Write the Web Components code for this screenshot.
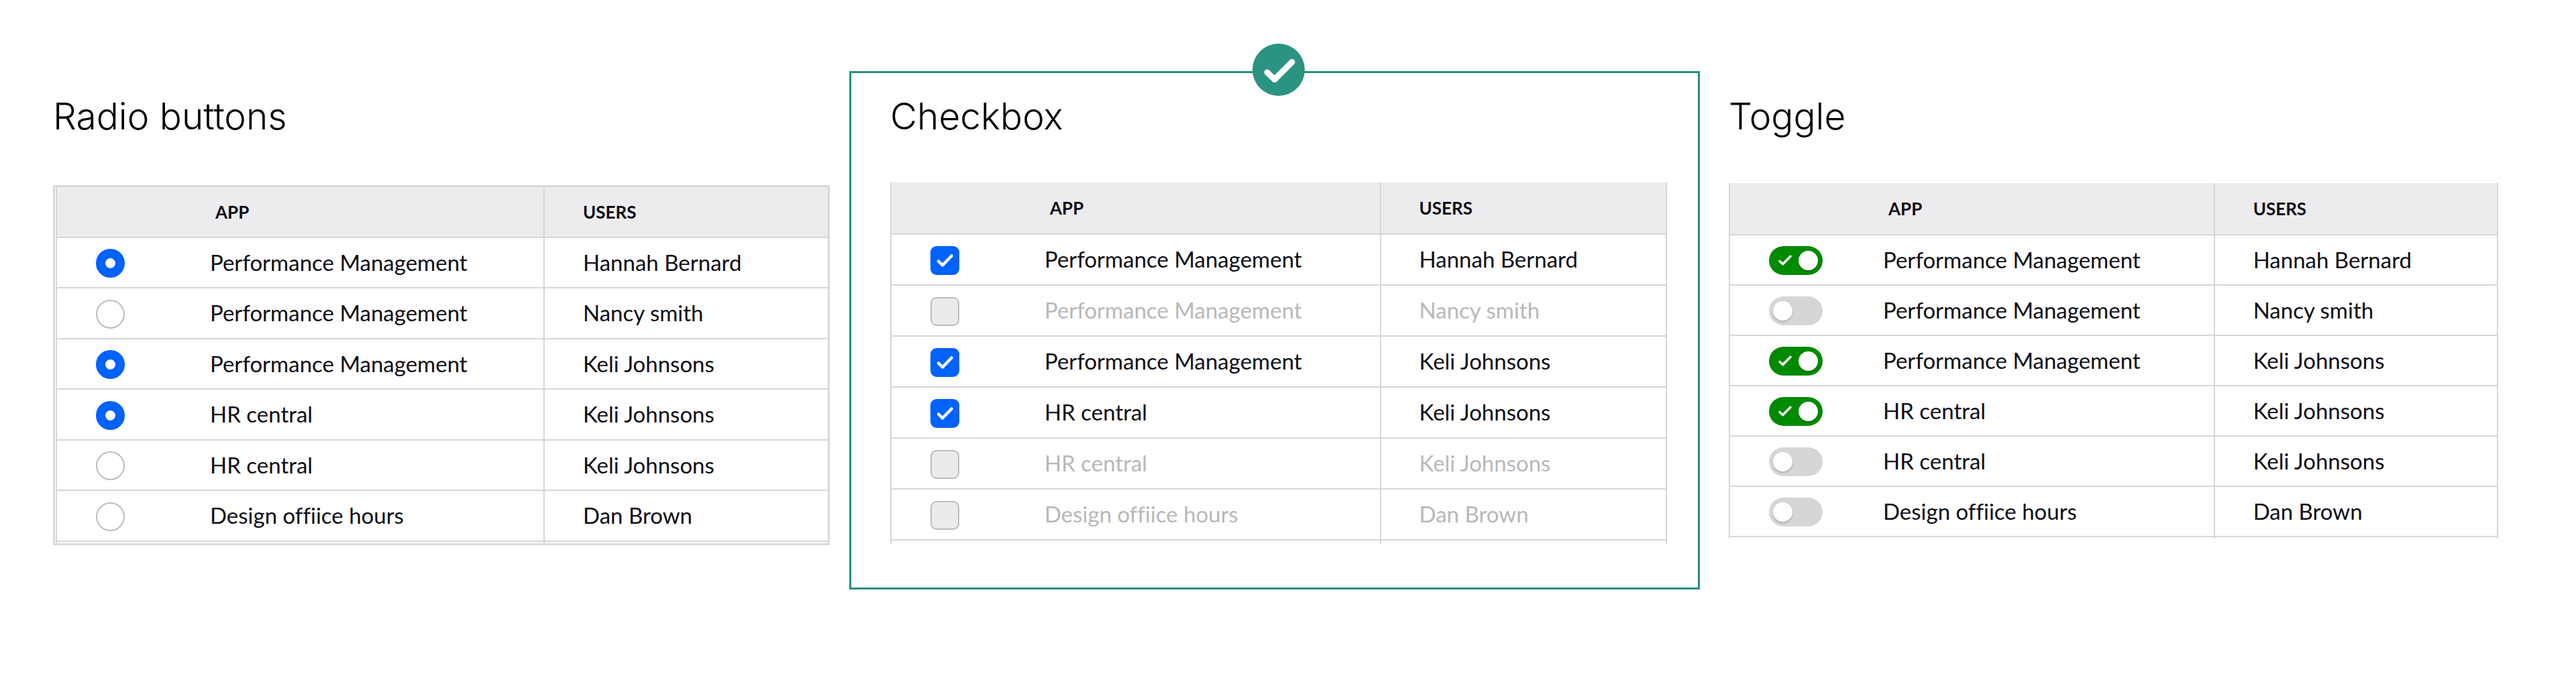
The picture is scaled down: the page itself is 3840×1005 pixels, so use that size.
<!DOCTYPE html>
<html lang="en">
<head>
<meta charset="utf-8">
<title>Selection controls</title>
<style>
  body { margin: 0; background: #fff; font-family: "Lato", sans-serif; color: #0d0d16; }
</style>
</head>
<body>
<control-gallery>
  <control-panel heading="Radio buttons"><app-table kind="radio"></app-table></control-panel>
  <control-panel heading="Checkbox" chosen><app-table kind="checkbox"></app-table></control-panel>
  <control-panel heading="Toggle"><app-table kind="toggle"></app-table></control-panel>
</control-gallery>
<script>
class ControlGallery extends HTMLElement {
  constructor() {
    super();
    this.attachShadow({ mode: "open" }).innerHTML = `
      <style>
        :host { display: block; }
        main {
          display: grid;
          grid-template-columns: 1158fr 1268fr 1161fr;
          gap: 29px;
          align-items: start;
          padding: 106px 116px 0 79px;
        }
        ::slotted(:last-child) { padding-left: 14px; }
      </style>
      <main><slot></slot></main>`;
  }
}

class ControlPanel extends HTMLElement {
  connectedCallback() {
    this.attachShadow({ mode: "open" }).innerHTML = `
      <style>
        :host { display: block; min-width: 0; }
        section { position: relative; box-sizing: border-box; padding-top: 37px; }
        h2 { margin: 0; font-family: "Inter", sans-serif; font-size: 55px; line-height: 60px; padding-bottom: 4px; font-weight: 300; color: #000; }
        :host([chosen]) section { border: 3px solid #27907f; padding: 34px 46px 65px 58px; }
        svg { position: absolute; top: -44px; left: 50%; margin-left: -33px; width: 78px; height: 78px; }
      </style>
      <section>
        <h2>${this.getAttribute("heading")}</h2>
        <slot></slot>
        ${this.hasAttribute("chosen") ? `
        <svg viewBox="0 0 78 78" role="img" aria-label="Chosen option">
          <circle cx="39" cy="39" r="39" fill="#2b9381"/>
          <path d="M22 43 33 53.500 59 27.500" fill="none" stroke="#fff" stroke-width="9" stroke-linecap="round" stroke-linejoin="round"/>
        </svg>` : ""}
      </section>`;
  }
}

const ROWS = [
  ["Performance Management", "Hannah Bernard", true],
  ["Performance Management", "Nancy smith", false],
  ["Performance Management", "Keli Johnsons", true],
  ["HR central", "Keli Johnsons", true],
  ["HR central", "Keli Johnsons", false],
  ["Design offiice hours", "Dan Brown", false]
];

const CONTROLS = {
  radio: (id, on) => `<input type="radio" id="${id}" name="${id}" ${on ? "checked" : ""}>`,
  checkbox: (id, on) => `<input type="checkbox" id="${id}" ${on ? "checked" : ""}>
    <svg viewBox="0 0 43 43"><path d="M12 22.500 18 28.500 31.500 14.500" stroke-width="4.500"/></svg>`,
  toggle: (id, on) => `<input type="checkbox" role="switch" id="${id}" ${on ? "checked" : ""}>
    <svg viewBox="0 0 80 43"><path d="M16 22.500 20.700 26.800 32 15.300" stroke-width="3.500"/></svg>
    <i></i>`
};

class AppTable extends HTMLElement {
  connectedCallback() {
    const kind = this.getAttribute("kind");
    this.attachShadow({ mode: "open" }).innerHTML = `
      <style>
        :host { display: block; --line: #d7d7da; --head: 78px; --odd: 75px; --even: 75px; --tail: 2px; --users: 37%; margin-top: 66px; }
        :host([kind="radio"]) { --head: 76px; --even: 76px; --users: 424px; margin-top: 69px; border: 3px solid #dadada; padding: 0 0 0 1px; }
        :host([kind="checkbox"]) { --odd: 76px; --even: 76px; --tail: 5px; margin-top: 65px; }
        table { width: 100%; border-collapse: separate; border-spacing: 0; table-layout: fixed; font-variant-ligatures: none; }
        th, td { box-sizing: border-box; padding: 0; text-align: left; border-bottom: 2px solid var(--line); }
        th { height: var(--head); background: #ececee; font-size: 26px; line-height: 32px; font-weight: 700; }
        td { height: var(--odd); font-size: 33px; line-height: 40px; padding-bottom: 2px; }
        tr:nth-child(even) td { height: var(--even); }
        tr > :first-child { width: 230px; padding-left: 58px; border-left: 2px solid var(--line); }
        tr > :last-child { width: var(--users); padding-left: 57px; border-left: 2px solid var(--line); border-right: 2px solid var(--line); }
        :host([kind="radio"]) tr > :last-child { border-right: 0; }
        th:nth-child(2) { padding-left: 8px; }
        tfoot td { height: var(--tail); border-bottom: 0; padding-bottom: 0; line-height: 0; font-size: 0; }
        .box { display: grid; grid-template: 43px / 43px; padding-top: 4px; }
        .toggle .box { grid-template-columns: 80px; }
        .box > * { grid-area: 1 / 1; }
        svg { width: 100%; height: 100%; pointer-events: none; visibility: hidden; fill: none; stroke: #fff; stroke-linecap: round; stroke-linejoin: round; }
        input:checked + svg { visibility: visible; }
        input { appearance: none; box-sizing: border-box; margin: 0; width: 100%; height: 100%; border: 2px solid #bdbdbf; background: #fff; }
        .radio input { border-radius: 50%; }
        .radio input:checked { border: 14px solid #0062ff; }
        .checkbox input { border-radius: 9px; background: #ebebeb; }
        .checkbox input:checked { background: #0062ff; border-color: #0062ff; }
        .checkbox .off td { color: #b8b8ba; }
        .toggle input { border: 0; border-radius: 22px; background: #d6d6d8; }
        .toggle input:checked { background: #008a00; }
        .toggle i { width: 29px; height: 29px; margin: 7px 6px; border-radius: 50%; background: #fff; box-shadow: 0 2px 3px rgba(0,0,0,.2); pointer-events: none; }
        .toggle input:checked ~ i { justify-self: end; margin-right: 7px; }
      </style>
      <table class="${kind}">
        <thead><tr><th></th><th scope="col">APP</th><th scope="col">USERS</th></tr></thead>
        <tbody>${ROWS.map(([app, user, on], i) => `
          <tr class="${on ? "on" : "off"}">
            <td><span class="box">${CONTROLS[kind](kind + i, on)}</span></td>
            <td><label for="${kind + i}">${app}</label></td>
            <td>${user}</td>
          </tr>`).join("")}
        </tbody>
        <tfoot><tr><td></td><td></td><td></td></tr></tfoot>
      </table>`;
  }
}

customElements.define("control-gallery", ControlGallery);
customElements.define("control-panel", ControlPanel);
customElements.define("app-table", AppTable);
</script>
</body>
</html>
